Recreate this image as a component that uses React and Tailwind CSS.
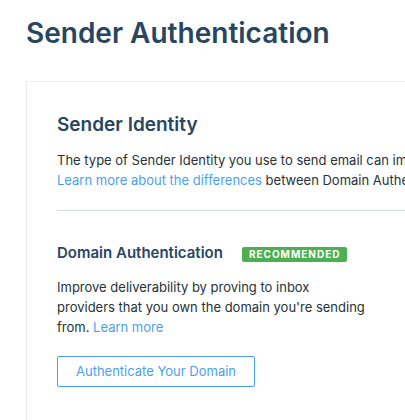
export default function App() {
  return (
    <div
      className="w-[405px] h-[420px] overflow-hidden bg-white"
      style={{ fontFamily: "Inter, 'Noto Sans', sans-serif" }}
    >
      <div className="w-[1000px] pl-[26px] pt-[15px]">
        {/* Page title */}
        <h1 className="text-[28px] leading-[36px] font-semibold text-[#294661]">
          Sender Authentication
        </h1>

        {/* Card */}
        <div className="mt-[30px] border border-[#e9ecef] pl-[30px] pt-[30px] pb-10">
          <h2 className="text-[19px] leading-[26px] font-semibold text-[#294661] mb-[12px]">
            Sender Identity
          </h2>
          <p className="text-[13px] leading-[20px] text-[#263238] whitespace-nowrap">
            The type of Sender Identity you use to send email can impact your deliverability and reputation.
            <br />
            <a className="text-[#4c9ff0]">Learn more about the differences</a> between Domain Authentication and Single Sender Verification.
          </p>

          <hr className="mt-5 border-0 border-t border-[#d4dadf]" />

          <div className="mt-[31px] w-[310px]">
            <div className="flex items-center gap-[19px] mb-[13px]">
              <h3 className="text-[15px] leading-[22px] font-semibold text-[#294661]">
                Domain Authentication
              </h3>
              <span className="bg-[#4caf50] text-white text-[10px] leading-[15px] font-bold tracking-[0.1em] px-[7px] rounded-[2px] mt-[2px]">
                RECOMMENDED
              </span>
            </div>
            <p className="text-[13px] leading-[20px] text-[#263238]">
              Improve deliverability by proving to inbox providers that you own the domain you're sending from.{" "}
              <a className="text-[#4c9ff0]">Learn more</a>
            </p>
            <button className="mt-[19px] h-[31px] w-[198px] border border-[#4c9ff0] rounded-[2px] text-[13px] text-[#4c9ff0] bg-white">
              Authenticate Your Domain
            </button>
          </div>
        </div>
      </div>
    </div>
  );
}
